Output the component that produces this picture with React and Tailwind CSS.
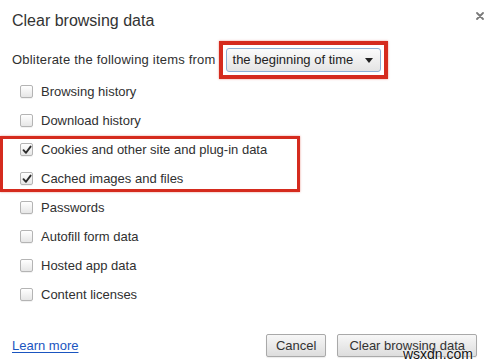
import React from "react";

const items = [
  { label: "Browsing history", checked: false },
  { label: "Download history", checked: false },
  { label: "Cookies and other site and plug-in data", checked: true },
  { label: "Cached images and files", checked: true },
  { label: "Passwords", checked: false },
  { label: "Autofill form data", checked: false },
  { label: "Hosted app data", checked: false },
  { label: "Content licenses", checked: false },
];

function Checkbox({ checked }) {
  return (
    <span className="w-[13px] h-[13px] shrink-0 rounded-[2px] border border-[#b4b4b4] bg-gradient-to-b from-[#ffffff] to-[#e6e6e6] shadow-[0_1px_0_rgba(0,0,0,0.05)] flex items-center justify-center">
      {checked && (
        <svg width="10" height="10" viewBox="0 0 10 10">
          <path d="M1.5 5.2 L4 7.8 L8.6 1.6" fill="none" stroke="#2b2b2b" strokeWidth="1.9" strokeLinecap="round" strokeLinejoin="round" />
        </svg>
      )}
    </span>
  );
}

function Row({ item }) {
  return (
    <label className="h-[29px] pl-[20px] flex items-center gap-[8px]">
      <Checkbox checked={item.checked} />
      <span>{item.label}</span>
    </label>
  );
}

export default function App() {
  return (
    <div className="w-[485px] h-[364px] bg-white relative overflow-hidden text-[13px] text-[#303030] font-['Liberation_Sans',Arial,sans-serif]">
      <div className="h-[41px] flex items-center justify-between pl-[12px] pr-[1px]">
        <h1 className="text-[16px] text-[#333]">Clear browsing data</h1>
        <svg width="8" height="8" viewBox="0 0 8 8" className="mb-[10px]">
          <path d="M1 1 L7 7 M7 1 L1 7" stroke="#7a7a7a" strokeWidth="1.8" strokeLinecap="round" />
        </svg>
      </div>

      <div className="flex items-center pl-[12px]">
        <span className="tracking-[0.2px]">Obliterate the following items from</span>
        <div className="ml-[3px] border-[4px] border-[#d52b1e] p-[3px] shadow-[0_0_2px_rgba(213,43,30,0.5)]">
          <div className="w-[155px] h-[24px] rounded-[3px] border border-[#8fb0d6] bg-gradient-to-b from-[#fbfbfb] to-[#e4e4e4] flex items-center justify-between pl-[6px] pr-[7px] text-[#222]">
            <span>the beginning of time</span>
            <svg width="8" height="5" viewBox="0 0 8 5">
              <path d="M0 0 H8 L4 5 Z" fill="#222" />
            </svg>
          </div>
        </div>
      </div>

      <div className="-mt-[2px]">
        <Row item={items[0]} />
        <Row item={items[1]} />
        <div className="relative">
          <Row item={items[2]} />
          <Row item={items[3]} />
          <div className="absolute left-0 top-[1px] w-[300px] h-[56px] border-[3px] border-[#d52b1e] shadow-[0_0_2px_rgba(213,43,30,0.5)]" />
        </div>
        {items.slice(4).map((item) => (
          <Row key={item.label} item={item} />
        ))}
      </div>

      <div className="mt-[25px] flex items-center justify-between pl-[12px] pr-[8px]">
        <a href="#" className="text-[#1a55c0] underline underline-offset-2">Learn more</a>
        <div className="flex gap-[11px]">
          <button className="h-[23px] px-[9px] rounded-[2px] border border-[#a9a9a9] bg-gradient-to-b from-[#f7f7f7] to-[#dddddd] text-[#333] shadow-[0_1px_1px_rgba(0,0,0,0.08)]">
            Cancel
          </button>
          <button className="h-[23px] px-[11px] rounded-[2px] border border-[#a9a9a9] bg-gradient-to-b from-[#f7f7f7] to-[#dddddd] text-[#333] shadow-[0_1px_1px_rgba(0,0,0,0.08)]">
            Clear browsing data
          </button>
        </div>
      </div>

      <span className="absolute right-[12px] bottom-[3px] text-[14px] leading-none text-[#111] [text-shadow:0_0_2px_#fff,0_0_2px_#fff]">
        wsxdn.com
      </span>
    </div>
  );
}
